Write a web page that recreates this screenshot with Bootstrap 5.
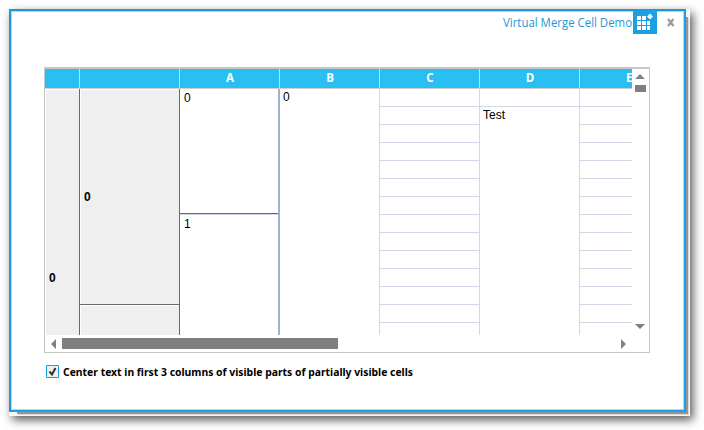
<!DOCTYPE html>
<html lang="en">
<head>
<meta charset="utf-8">
<meta name="viewport" content="width=device-width, initial-scale=1">
<title>Virtual Merge Cell Demo</title>
<link href="https://cdn.jsdelivr.net/npm/bootstrap@5.3.0/dist/css/bootstrap.min.css" rel="stylesheet">
<style>
body{width:704px;height:430px;overflow:hidden;font-family:"Open Sans","Noto Sans",sans-serif;font-size:12px;line-height:16px;color:#000;padding:9px 0 0 9px}
.frame{width:681px;height:407px;background:#f8f8f8;box-shadow:3px 4px 9px rgba(0,0,0,.65)}
.win{width:677px;height:403px;border:2px solid #1ba1e8;border-top-color:#2196d8;border-left-color:#2196d8;box-shadow:inset 0 0 0 1px #a5dcf5,5px 5px 0 -3px #959595,6px 6px 0 -3px #d8d8d8}
.bar{height:24px;margin-top:-1px}
.sheet{width:606px;height:286px;margin:33px 0 0 33px;border:1px solid #c6c6c6;border-top-width:2px}
.grid-area{width:587px;height:266px}
.heads{height:20px;background:#2abff2;border-bottom:1px solid #cfcfcf;color:#fff;font-weight:700}
.heads>div{border-right:1px solid #cfdbe8;line-height:18px;font-size:11.5px;text-align:center;padding-left:1px;flex-shrink:0}
.cols>div{flex-shrink:0}
.w35{width:35px}.w100{width:100px}.w52{width:52px}
.heads .w52{border:0;text-align:left;padding-left:46px}
.cols{height:246px}
.gray{background:#efefef;border-right:1px solid #696969;box-shadow:inset 1px 1px #fff;font-weight:700}
.dark-b{border-bottom:1px solid #696969}
.lt{border-right:1px solid #d0d7e5}
.rules{background:repeating-linear-gradient(#fff 0 17px,#d0d7e5 17px 18px)}
.blue-r{border-right:2px solid #9ab4d4}
.cell-a{height:125px;padding:3px 4px 0;border-bottom:1px solid #696969;box-shadow:0 1px #d0d7e5}
.num{font-family:"Liberation Sans",Arial,sans-serif;font-size:12px}
.opt{margin:12px 0 0 35px;font-weight:700;font-family:"Noto Sans","Open Sans",sans-serif}
svg{display:block;overflow:visible;flex-shrink:0}
</style>
<script src="https://cdn.jsdelivr.net/npm/bootstrap@5.3.0/dist/js/bootstrap.bundle.min.js"></script>
</head>
<body>
<div class="frame">
<main class="win bg-white">
  <header class="bar d-flex justify-content-end">
    <svg width="130" height="24"><text x="0" y="17" fill="#1f96d4" font-size="12" textLength="129" lengthAdjust="spacingAndGlyphs">Virtual Merge Cell Demo</text></svg>
    <svg width="24" height="24"><path fill="#1ba1e2" d="M0 0h24v24H0z"/><path fill="#fff" d="M4 6h4v4H4zM9 6h4v4H9zM4 11h4v4H4zM9 11h4v4H9zM14 11h3v4h-3zM4 16h4v4H4zM9 16h4v4H9zM14 16h3v4h-3zM17 3.500l3 3-3 3-3-3z"/></svg>
    <svg width="27" height="24"><path d="M11 9l5.500 7M16.500 9L11 16" stroke="#9a9a9a" stroke-width="2.200"/></svg>
  </header>
  <section class="sheet d-flex flex-column">
    <div class="d-flex">
      <div class="grid-area overflow-hidden">
        <div class="heads d-flex"><div class="w35"></div><div class="w100"></div><div class="w100">A</div><div class="w100">B</div><div class="w100">C</div><div class="w100">D</div><div class="w52 overflow-hidden">E</div></div>
        <div class="cols d-flex">
          <div class="w35 gray px-1 num"><div style="padding-top:181px">0</div></div>
          <div class="w100 d-flex flex-column"><div class="gray dark-b px-1 num" style="height:216px"><div style="padding-top:100px">0</div></div><div class="gray flex-grow-1"></div></div>
          <div class="w100 blue-r num"><div class="cell-a lh-1">0</div><div class="px-1 pt-1 lh-1">1</div></div>
          <div class="w100 lt num"><div style="padding-left:3px">0</div></div>
          <div class="w100 lt rules"></div>
          <div class="w100 lt num"><div style="height:18px;border-bottom:1px solid #d0d7e5"></div><div style="padding-left:3px">Test</div></div>
          <div class="w52 rules"></div>
        </div>
      </div>
      <svg width="17" height="266"><path fill="#808080" d="M3 10l5-5 5 5zM3 16h11v7H3zM3 255h10l-5 5z"/></svg>
    </div>
    <svg width="604" height="17"><path fill="#808080" d="M11 4v10L6 9zM17 3h276v11H17zM576 4v10l5-5z"/></svg>
  </section>
  <div class="opt d-flex">
    <svg width="13" height="13"><path fill="#efefef" stroke="#1ba1e2" d="M.5.5h12v12H.5z"/><path d="M3.500 6.500L6 9.500 9.500 3" fill="none" stroke="#333" stroke-width="2"/></svg>
    <svg width="358" height="16"><text x="4" y="11" font-size="11" textLength="350" lengthAdjust="spacingAndGlyphs">Center text in first 3 columns of visible parts of partially visible cells</text></svg>
  </div>
</main>
</div>
</body>
</html>
